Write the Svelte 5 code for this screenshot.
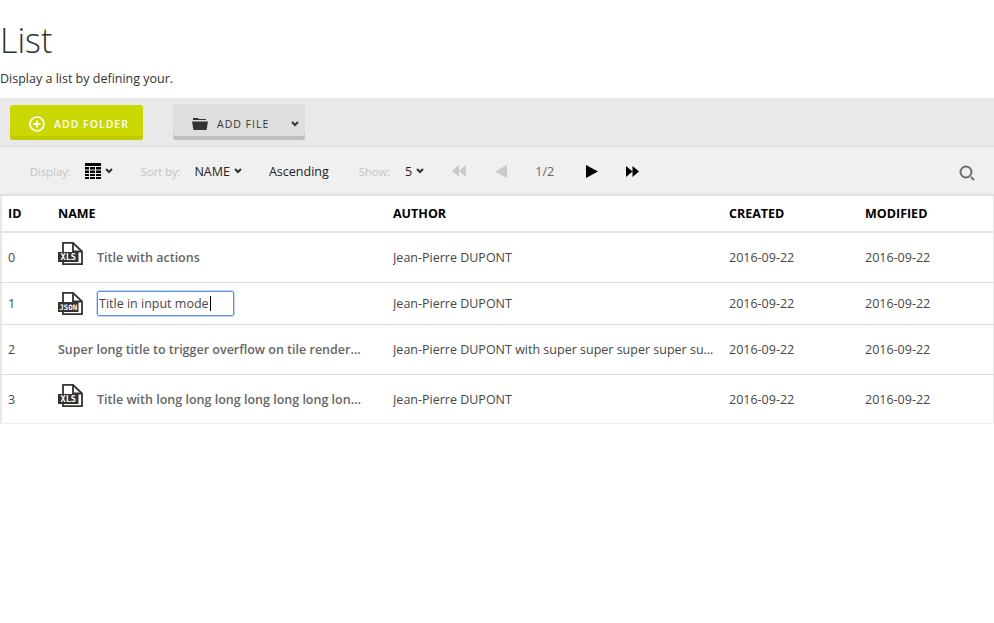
<script>
  const rows = [
    { id: 0, title: 'Title with actions', icon: 'XLS', author: 'Jean-Pierre DUPONT', h: 'tall' },
    { id: 1, title: 'Title in input mode', icon: 'JSON', author: 'Jean-Pierre DUPONT', input: true, h: 'short' },
    { id: 2, title: 'Super long title to trigger overflow on tile renderer with more words', author: 'Jean-Pierre DUPONT with super super super super super long name', h: 'tall' },
    { id: 3, title: 'Title with long long long long long long long long title', icon: 'XLS', author: 'Jean-Pierre DUPONT', h: 'tall' }
  ];
</script>

{#snippet chevron()}
  <svg class="chevron" viewBox="0 0 8 6" width="8" height="6"><path d="M1 1l3 3 3-3" fill="none" stroke="currentColor" stroke-width="2" /></svg>
{/snippet}

{#snippet fileIcon(label)}
  <svg class="file-icon" viewBox="0 0 25 25" width="25" height="25">
    <path d="M5 11V1.800h10L24 10.500v12.700H5V21" fill="none" stroke="#333" stroke-width="1.800" />
    <path d="M15 1.800v8.700h9" fill="none" stroke="#333" stroke-width="1.800" />
    <rect x="0" y="11" width="20.500" height="10" fill="#333" />
    <text x="10.200" y="19" text-anchor="middle" class="file-label" class:small={label !== 'XLS'}>{label}</text>
  </svg>
{/snippet}

<div class="page">
  <header class="intro">
    <h1>List</h1>
    <p>Display a list by defining your.</p>
  </header>

  <div class="actions">
    <button class="btn btn-primary">
      <svg viewBox="0 0 16 16" width="16" height="16"><circle cx="8" cy="8" r="7" fill="none" stroke="#fff" stroke-width="1.700" /><path d="M8 4.500v7M4.500 8h7" stroke="#fff" stroke-width="1.800" /></svg>
      ADD FOLDER
    </button>
    <button class="btn btn-file">
      <svg viewBox="0 0 16 13" width="16" height="13"><path d="M1 3V1h5l1 1h7v1zM0 4.500h16L14.500 13h-13z" fill="#333" /></svg>
      <span class="file-text">ADD FILE</span>
      {@render chevron()}
    </button>
  </div>

  <div class="toolbar">
    <span class="lbl lbl-display">Display:</span>
    <svg class="grid-icon" viewBox="0 0 16 16" width="16" height="16">
      <rect width="16" height="3" y="0" /><path d="M0 4h4v2.500H0zM5 4h5v2.500H5zM11 4h5v2.500h-5zM0 7.500h4V10H0zM5 7.500h5V10H5zM11 7.500h5V10h-5zM0 11h4v2H0zM5 11h5v2H5zM11 11h5v2h-5zM0 14h4v2H0zM5 14h5v2H5zM11 14h5v2h-5z" />
    </svg>
    <span class="chev-slot">{@render chevron()}</span>
    <span class="lbl lbl-sort">Sort by:</span>
    <span class="val">NAME</span>
    <span class="chev-slot">{@render chevron()}</span>
    <span class="val asc">Ascending</span>
    <span class="lbl lbl-show">Show:</span>
    <span class="val">5</span>
    <span class="chev-slot">{@render chevron()}</span>
    <svg class="pg first" viewBox="0 0 14 12" width="14" height="12"><path d="M7 0v12L0 6zM14 0v12L7 6z" fill="#c9c9c9" /></svg>
    <svg class="pg prev" viewBox="0 0 12 13" width="12" height="13"><path d="M12 0v13L0 6.500z" fill="#c9c9c9" /></svg>
    <span class="pages">1/2</span>
    <svg class="pg next" viewBox="0 0 12 13" width="12" height="13"><path d="M0 0v13l12-6.500z" fill="#000" /></svg>
    <svg class="pg last" viewBox="0 0 13 11" width="13" height="11"><path d="M0 0v11l6.500-5.500zM6.500 0v11L13 5.500z" fill="#000" /></svg>
    <svg class="search" viewBox="0 0 16 16" width="16" height="16"><circle cx="7" cy="7" r="5.500" fill="none" stroke="#6f6f6f" stroke-width="2" /><path d="M12 12l3 3" stroke="#6f6f6f" stroke-width="2" /></svg>
  </div>

  <table>
    <colgroup><col class="c-id" /><col class="c-name" /><col class="c-author" /><col class="c-created" /><col /></colgroup>
    <thead>
      <tr><th>ID</th><th>NAME</th><th>AUTHOR</th><th>CREATED</th><th>MODIFIED</th></tr>
    </thead>
    <tbody>
      {#each rows as row}
        <tr class={row.h}>
          <td>{row.id}</td>
          <td class="name-td">
            <div class="name-cell">
              {#if row.icon}{@render fileIcon(row.icon)}{/if}
              {#if row.input}
                <span class="input-wrap">
                  <input value={row.title} />
                  <i class="caret"></i>
                </span>
              {:else}
                <span class="title">{row.title}</span>
              {/if}
            </div>
          </td>
          <td class="author-td"><div class="author">{row.author}</div></td>
          <td>2016-09-22</td>
          <td>2016-09-22</td>
        </tr>
      {/each}
    </tbody>
  </table>
</div>

<style>
  :global(body) {
    margin: 0;
    background: #fff;
    font-family: "Open Sans", "Noto Sans", sans-serif;
    color: #323232;
  }

  .page {
    width: 994px;
    font-size: 12.500px;
  }

  .intro {
    height: 98px;
    overflow: hidden;
  }

  h1 {
    margin: 0;
    padding-top: 20px;
    font-size: 34px;
    line-height: 40px;
    font-weight: 300;
    color: #2d3532;
  }

  .intro p {
    margin: 9px 0 0;
    line-height: 20px;
  }

  .actions {
    height: 48px;
    background: #e9e9e9;
    border-bottom: 1px solid #dcdcdc;
    display: flex;
    align-items: flex-start;
    padding-left: 10px;
    gap: 30px;
  }

  .btn {
    display: flex;
    align-items: center;
    border: 0;
    border-radius: 3px;
    font: inherit;
    font-size: 10.500px;
    letter-spacing: 1px;
    padding: 2px 0 0;
    box-sizing: border-box;
  }

  .btn-primary {
    margin-top: 7px;
    width: 133px;
    height: 35px;
    background: #c8d800;
    box-shadow: inset 0 -4px 0 #c0cc00;
    color: #fff;
    font-weight: 600;
    padding-left: 19px;
    gap: 9px;
  }

  .btn-file {
    margin-top: 6px;
    width: 132px;
    height: 36px;
    padding-top: 3px;
    background: #dedede;
    box-shadow: inset 0 -4px 0 #bfbfbf;
    color: #333;
    padding-left: 19px;
  }

  .file-text {
    margin-left: 9px;
  }

  .btn-file .chevron {
    margin-left: 22px;
  }

  .toolbar {
    height: 46px;
    padding-top: 1px;
    background: #f0f0f0;
    border-bottom: 2px solid #e2e2e2;
    display: flex;
    align-items: center;
  }

  .lbl {
    color: #c4c4c4;
    font-size: 11.200px;
  }

  .lbl-display { margin-left: 30px; }
  .grid-icon { margin-left: 14px; }
  .chev-slot { margin-left: 4px; display: flex; }
  .lbl-sort { margin-left: 28px; }
  .lbl-sort + .val { margin-left: 14px; }
  .val + .chev-slot { margin-left: 4px; }
  .val { color: #222; }
  .asc { margin-left: 27px; }
  .lbl-show { margin-left: 30px; }
  .lbl-show + .val { margin-left: 15px; }
  .first { margin-left: 28px; }
  .prev { margin-left: 29px; }
  .pages { margin-left: 28px; color: #666; }
  .next { margin-left: 32px; }
  .last { margin-left: 28px; }
  .search { margin-left: auto; margin-right: 19px; margin-top: 4px; }

  table {
    width: 994px;
    table-layout: fixed;
    border-collapse: collapse;
    box-shadow: inset 2px 0 0 #e8e8e8, inset -1px 0 0 #e8e8e8;
  }

  .c-id { width: 50px; }
  .c-name { width: 335px; }
  .c-author { width: 336px; }
  .c-created { width: 136px; }

  th {
    height: 35px;
    padding: 0 8px;
    text-align: left;
    font-size: 12.500px;
    font-weight: 700;
    color: #000;
    border-bottom: 2px solid #e4e4e4;
  }

  td {
    padding: 0 8px;
    color: #464646;
    border-bottom: 1px solid #dedede;
  }

  td.name-td { padding-right: 19px; }
  td.author-td { padding-right: 6px; }

  tr.tall { height: 50px; }
  tr.short { height: 42px; }
  tbody tr:last-child td {
    padding-top: 1px;
    border-bottom-color: #eeeeee;
  }
  tbody tr:last-child { height: 49px; }

  .name-cell {
    display: flex;
    align-items: center;
    gap: 14px;
    min-width: 0;
  }

  .title {
    font-weight: 600;
    color: #666;
    white-space: nowrap;
    overflow: hidden;
    text-overflow: ellipsis;
  }

  .author {
    white-space: nowrap;
    overflow: hidden;
    text-overflow: ellipsis;
  }

  .input-wrap {
    position: relative;
    display: block;
  }

  input {
    display: block;
    width: 137px;
    height: 25px;
    box-sizing: border-box;
    padding: 0 1px;
    border: 1px solid #5a8ee8;
    border-radius: 2px;
    font: inherit;
    color: #464646;
    outline: 1px solid #c4d6f5;
  }

  .caret {
    position: absolute;
    left: 113px;
    top: 5px;
    width: 1px;
    height: 15px;
    background: #000;
  }

  .file-icon {
    flex: none;
  }

  .tall .file-icon {
    margin-bottom: 8px;
  }

  .file-label {
    font-size: 8.500px;
    font-weight: 700;
    fill: #fff;
    font-family: "DejaVu Sans Mono", monospace;
  }

  .file-label.small {
    font-size: 7.500px;
  }
</style>
